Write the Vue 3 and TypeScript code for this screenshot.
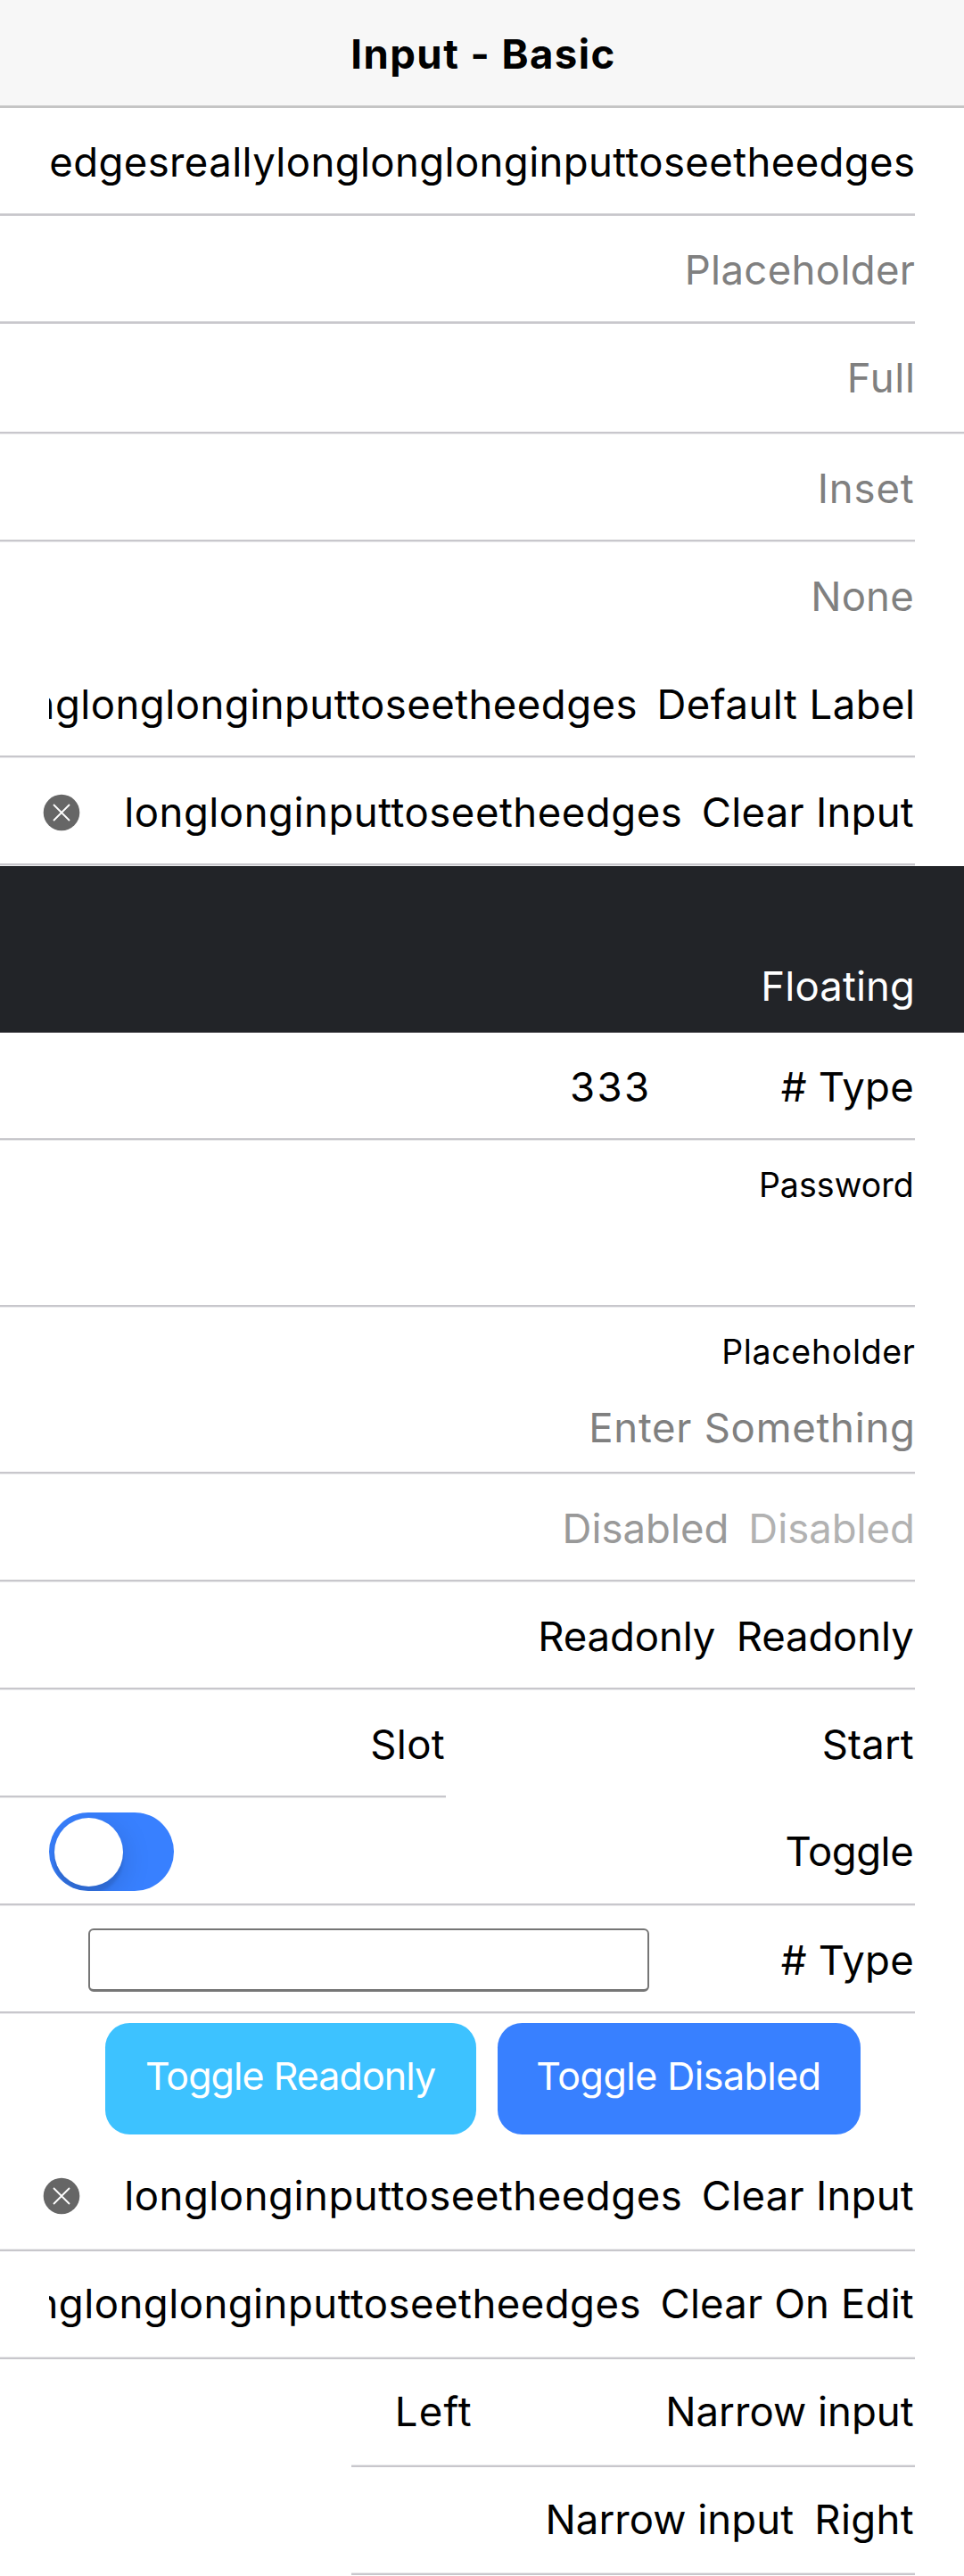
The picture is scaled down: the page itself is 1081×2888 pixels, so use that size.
<script setup lang="ts">
interface Text {
  text: string
  /** letter spacing in px */
  spacing: number
}

interface Row {
  label?: Text
  value?: Text
  placeholder?: Text
  kind?: string
  clear?: boolean
}

const t = (text: string, spacing = 0): Text => ({ text, spacing })

const spacingOf = (item?: Text) => ({
  '--ls': `${item?.spacing ?? 0}px`,
  '--end': item && /([tye]|word)$/.test(item.text) ? '1.3px' : '0px',
})

const rows: Row[] = [
  { value: t('edgesreallylonglonglonginputtoseetheedges', 0.38), kind: 'snug' },
  { placeholder: t('Placeholder', 0.34), kind: 'snug' },
  { placeholder: t('Full', 0.68), kind: 'full' },
  { placeholder: t('Inset', 0.86) },
  { placeholder: t('None', 0.18), kind: 'none' },
  { value: t('nglonglonginputtoseetheedges', 0.47), label: t('Default Label', 0.45), kind: 'clip' },
  { value: t('longlonginputtoseetheedges', 0.52), label: t('Clear Input', 0.25), clear: true },
  { label: t('Floating', 0.12), kind: 'floating' },
  { value: t('333', 2.3), label: t('# Type', 0.19), kind: 'fixed' },
  { label: t('Password', 0.04), kind: 'stacked' },
  { label: t('Placeholder', 0.68), placeholder: t('Enter Something', 0.73), kind: 'stacked' },
  { value: t('Disabled'), label: t('Disabled'), kind: 'disabled' },
  { value: t('Readonly', -0.13), label: t('Readonly', -0.13) },
  { value: t('Slot', 0.4), label: t('Start', 0.08), kind: 'slot' },
  { label: t('Toggle', -0.47), kind: 'toggle' },
  { label: t('# Type', 0.19), kind: 'boxed' },
]

const lowerRows: Row[] = [
  { value: t('longlonginputtoseetheedges', 0.52), label: t('Clear Input', 0.25), clear: true, kind: 'snug' },
  { value: t('nglonglonginputtoseetheedges', 0.47), label: t('Clear On Edit', 0.16), kind: 'snug clip' },
  { value: t('Left', 1.15), label: t('Narrow input', 0.04), kind: 'snug narrow left' },
  { value: t('Narrow input', 0.04), label: t('Right', 0.35), kind: 'snug narrow' },
]
</script>

<template>
  <main class="page">
    <header class="header"><h1>Input - Basic</h1></header>
    <template v-for="(list, n) in [rows, lowerRows]" :key="n">
      <section class="list" :class="{ lower: n === 1 }">
        <div v-for="(row, i) in list" :key="i" class="row" :class="row.kind">
          <div class="inner">
            <svg v-if="row.clear" class="clear" viewBox="0 0 42 42">
              <circle cx="21" cy="21" r="20.3" fill="#666" />
              <path d="M12 12l18 18M30 12L12 30" fill="none" stroke="#fff" stroke-width="1.8" />
            </svg>
            <span v-if="row.kind === 'toggle'" class="switch"><i></i></span>
            <span v-else-if="row.kind === 'boxed'" class="box"></span>
            <span v-else class="field" :class="{ hint: row.placeholder }">
              <span class="text" :style="spacingOf(row.value || row.placeholder)">{{ (row.value || row.placeholder)?.text }}</span>
            </span>
            <span v-if="row.label && row.kind !== 'slot'" class="label">
              <span class="text" :style="spacingOf(row.label)">{{ row.label.text }}</span>
            </span>
          </div>
          <span v-if="row.kind === 'slot'" class="start">
            <span class="text" :style="spacingOf(row.label)">{{ row.label?.text }}</span>
          </span>
        </div>
      </section>
      <div v-if="n === 0" class="buttons">
        <button class="cyan">Toggle Readonly</button>
        <button class="blue">Toggle Disabled</button>
      </div>
    </template>
  </main>
</template>

<style>
body { background: #fff; }
</style>

<style scoped>
* { box-sizing: border-box; }
.page {
  width: 1081px;
  height: 2888px;
  overflow: hidden;
  background: #fff;
  color: #000;
  font: 400 45.5px/56px Inter, sans-serif;
}
.header {
  height: 121px;
  background: #f7f7f7;
  border-bottom: 2px solid #c4c4c4;
  box-shadow: inset 0 -1px 0 #d2d2d2;
  display: flex;
  align-items: center;
  justify-content: center;
  padding: 2px 0 0 3px;
}
h1 { margin: 0; font-size: 45.5px; font-weight: 700; line-height: 56px; letter-spacing: 1.45px; }
.row { height: 121px; display: flex; padding-right: 55px; }
.inner {
  flex: 1;
  min-width: 0;
  height: 120px;
  border-bottom: 2px solid #c8c7cc;
  box-shadow: 0 1px 0 #ebebed;
  padding: 3px 0 0 55px;
  display: flex;
  align-items: center;
}
.snug .inner { height: 121px; padding-top: 2px; box-shadow: inset 0 -1px 0 #d8d8db; }
.lower .snug .inner { padding-top: 0; padding-bottom: 2px; box-shadow: inset 0 -1px 0 #ebebed; }
.field {
  flex: 1;
  min-width: 0;
  height: 60px;
  line-height: 60px;
  display: flex;
  justify-content: flex-end;
  white-space: nowrap;
}
.clip .field { overflow: hidden; }
.text { flex: none; letter-spacing: var(--ls); margin-right: calc(var(--end) - var(--ls)); }
.label { margin-left: 22px; white-space: nowrap; flex: none; display: flex; justify-content: flex-end; }
.hint { color: #808080; }
.clear { width: 42px; height: 42px; flex: none; margin: 0 48px 0 -7px; }
.full { height: 124px; padding-right: 0; }
.full .inner { padding: 0 55px 0 0; height: 123px; }
.none .inner { border-color: transparent; box-shadow: none; }
.floating { height: 187px; background: #222428; color: #fff; border-bottom: 1px solid #656468; }
.floating .inner { height: 186px; border: 0; box-shadow: none; align-items: flex-end; padding-bottom: 23px; }
.fixed .label, .boxed .label { width: 276px; }
.stacked { height: 187px; }
.stacked .inner { height: 186px; flex-direction: column-reverse; align-items: flex-end; justify-content: flex-end; padding-top: 25px; }
.stacked .label { font-size: 37.5px; line-height: 50px; margin: 0; }
.stacked .field { flex: none; margin-top: 30px; }
.disabled .field { color: #999; }
.disabled .label { color: #b2b2b2; }
.slot .inner { flex: none; width: 500px; }
.start { flex: 1; display: flex; justify-content: flex-end; line-height: 121px; }
.toggle .inner { justify-content: space-between; padding-top: 2px; }
.switch { width: 140px; height: 88px; border-radius: 44px; background: #3880ff; padding: 5.5px; overflow: hidden; }
.switch i { display: block; width: 77px; height: 77px; border-radius: 50%; background: #fff; box-shadow: 0 8px 33px rgba(0, 0, 0, .16), 0 8px 3px rgba(0, 0, 0, .1); }
.boxed .inner { padding-left: 99px; }
.box { flex: 1; height: 71px; border: 2px solid #767676; border-bottom-width: 3px; border-radius: 6px; }
.buttons { height: 145px; padding: 10px 0 0 118px; display: flex; gap: 24px; align-items: flex-start; }
button { border: 0; height: 124.5px; border-radius: 27.5px; color: #fff; font: 400 43px/60px Inter, sans-serif; padding: 0 1px 6px 0; white-space: nowrap; }
.cyan { width: 416px; background: #3dc2ff; letter-spacing: -0.95px; }
.blue { width: 407px; background: #3880ff; letter-spacing: -0.51px; }
.narrow { padding-left: 394px; }
.narrow .inner { padding-left: 0; }
.left .label { width: 474px; }
</style>
